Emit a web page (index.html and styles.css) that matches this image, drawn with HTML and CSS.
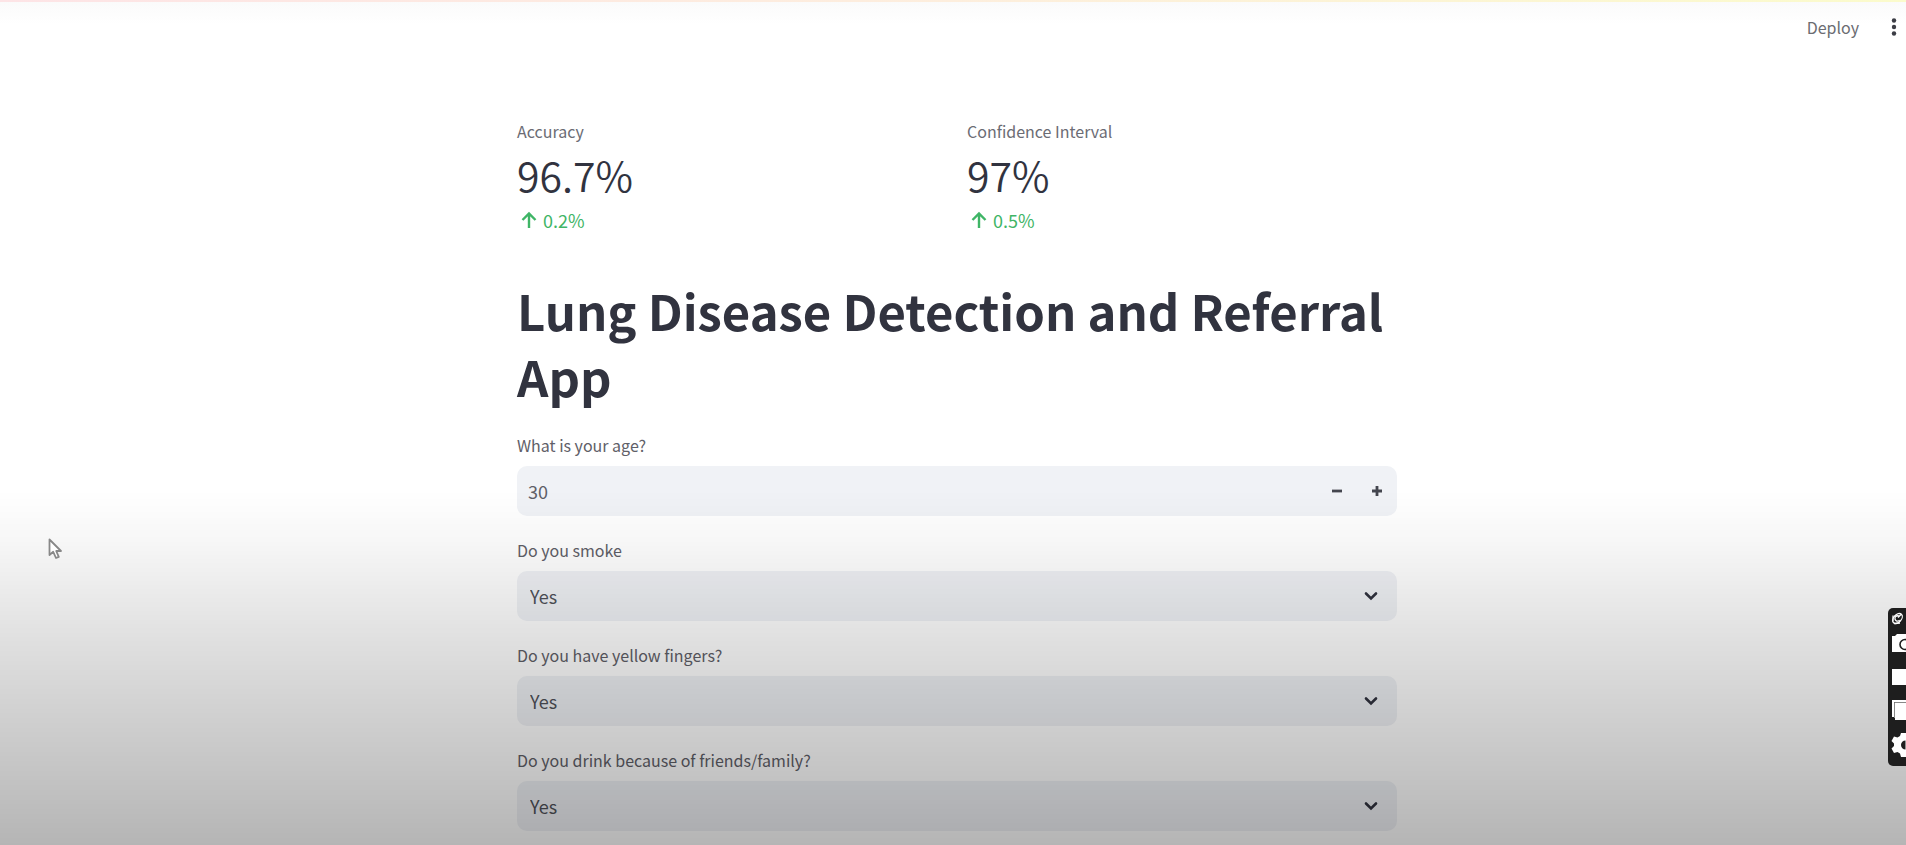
FILE: index.html
```html
<!DOCTYPE html>
<html lang="en">
<head>
<meta charset="utf-8">
<meta name="viewport" content="width=device-width, initial-scale=1">
<title>Lung Disease Detection and Referral App</title>
<link rel="stylesheet" href="styles.css">
</head>
<body>
<header class="topbar">
  <button class="deploy" type="button">Deploy</button>
  <button class="menu" type="button" aria-label="Main menu">
    <svg width="6" height="18" viewBox="0 0 6 18" fill="currentColor"><circle cx="3" cy="2.5" r="2.2"/><circle cx="3" cy="9" r="2.2"/><circle cx="3" cy="15.5" r="2.2"/></svg>
  </button>
</header>

<main class="content">
  <section class="metrics">
    <div class="metric">
      <div class="metric-label">Accuracy</div>
      <div class="metric-value">96.7%</div>
      <div class="metric-delta">
        <svg width="16" height="18" viewBox="0 0 16 18" fill="none" stroke="currentColor" stroke-width="2.4"><path d="M8 17V2.5M1.5 9 8 2.5 14.500 9"/></svg>
        <span>0.2%</span>
      </div>
    </div>
    <div class="metric">
      <div class="metric-label">Confidence Interval</div>
      <div class="metric-value">97%</div>
      <div class="metric-delta">
        <svg width="16" height="18" viewBox="0 0 16 18" fill="none" stroke="currentColor" stroke-width="2.4"><path d="M8 17V2.5M1.5 9 8 2.5 14.500 9"/></svg>
        <span>0.5%</span>
      </div>
    </div>
  </section>

  <h1 class="title">Lung Disease Detection and Referral App</h1>

  <form class="form">
    <div class="field">
      <label for="age">What is your age?</label>
      <div class="number">
        <input id="age" type="number" value="30">
        <button type="button" class="step" aria-label="Decrease"><svg width="12" height="12" viewBox="0 0 12 12" stroke="currentColor" stroke-width="2.8"><path d="M1 6H11"/></svg></button>
        <button type="button" class="step" aria-label="Increase"><svg width="12" height="12" viewBox="0 0 12 12" stroke="currentColor" stroke-width="2.8"><path d="M1 6H11M6 1V11"/></svg></button>
      </div>
    </div>
    <div class="field">
      <label for="smoke">Do you smoke</label>
      <div class="select">
        <select id="smoke"><option>Yes</option><option>No</option></select>
        <svg class="chevron" width="14" height="10" viewBox="0 0 14 10" fill="none" stroke="currentColor" stroke-width="2.6" stroke-linecap="round"><path d="M2 2.500 7 7.500 12 2.500"/></svg>
      </div>
    </div>
    <div class="field">
      <label for="fingers">Do you have yellow fingers?</label>
      <div class="select">
        <select id="fingers"><option>Yes</option><option>No</option></select>
        <svg class="chevron" width="14" height="10" viewBox="0 0 14 10" fill="none" stroke="currentColor" stroke-width="2.6" stroke-linecap="round"><path d="M2 2.500 7 7.500 12 2.500"/></svg>
      </div>
    </div>
    <div class="field">
      <label for="drink">Do you drink because of friends/family?</label>
      <div class="select">
        <select id="drink"><option>Yes</option><option>No</option></select>
        <svg class="chevron" width="14" height="10" viewBox="0 0 14 10" fill="none" stroke="currentColor" stroke-width="2.6" stroke-linecap="round"><path d="M2 2.500 7 7.500 12 2.500"/></svg>
      </div>
    </div>
  </form>
</main>

<div class="shade"></div>

<svg class="cursor" width="15" height="22" viewBox="0 0 15 22" fill="#fff" stroke="#888" stroke-width="1.8" stroke-linejoin="round"><path d="M1.500 1.500V17L5.200 13.800 8 20 10.800 18.800 8.200 13H13Z"/></svg>

<aside class="recorder" aria-label="Capture tools">
  <svg width="18" height="158" viewBox="0 0 18 158">
    <g fill="none" stroke="#fff" stroke-width="1.300"><ellipse cx="9.500" cy="10.500" rx="5.800" ry="3.800" transform="rotate(-48 9.500 10.500)"/><path d="M11.500 8.500a2.700 2.700 0 1 0 .2 3.700M5 7.500v6M6 15.500l6-.5M10 9.500l3-3"/></g>
    <path fill="#fff" d="M4 28H7L9 26H18V44H4Z"/>
    <circle cx="17" cy="36.500" r="5" fill="#fff" stroke="#1e1e1e" stroke-width="1.600"/>
    <path fill="#fff" d="M4 61H18V77H4Z"/>
    <path fill="#fff" d="M4 92H18V94H6V109H4Z"/>
    <path fill="#fff" d="M7 95H18V112H7Z"/>
    <path fill="none" stroke="#888" d="M6.500 110V94.500H18"/>
    <path fill="#fff" fill-rule="evenodd" d="M13 125H19V149H13L12 145.500 9.500 144 6 145 3.500 140.500 6 138V135.500L3.500 133 6 128.500 9.500 129.500 12 128ZM17.500 132.500a4.500 4.500 0 0 0 0 9Z"/>
  </svg>
</aside>
</body>
</html>
```
FILE: styles.css
```css
* {
  box-sizing: border-box;
}

body {
  margin: 0;
  min-height: 100vh;
  background: #fff;
  color: #31333f;
  font-family: "Noto Sans CJK SC", "Noto Sans", sans-serif;
  font-size: 16px;
  line-height: 24px;
}

button,
input,
select {
  font: inherit;
  color: inherit;
  border: 0;
  background: none;
  margin: 0;
  padding: 0;
}

.topbar {
  display: flex;
  justify-content: flex-end;
  align-items: center;
  gap: 32px;
  height: 53px;
  padding: 0 9px 0 0;
  background:
    linear-gradient(90deg, #fde4e6, #fdeedd 50%, #fbfbcc) top / 100% 2px no-repeat,
    linear-gradient(#fafafa, #fff 24px);
}

.deploy {
  color: #6b6c72;
}

.menu {
  display: flex;
  color: #3c3d45;
}

.content {
  width: 100%;
  max-width: 888px;
  margin: 0 auto;
  padding: 66px 0 12px 8px;
}

.metrics {
  display: grid;
  grid-template-columns: 1fr 1fr;
  gap: 20px;
}

.metric-label {
  color: #6b6c74;
}

.metric-value {
  margin-bottom: 3px;
  font-size: 41px;
  line-height: 62px;
  font-weight: 350;
}

.metric-delta {
  display: flex;
  align-items: center;
  gap: 6px;
  padding-left: 4px;
  color: #3fb566;
  font-size: 18px;
}

.title {
  margin: 45px 0 24px;
  font-size: 49px;
  line-height: 66px;
  font-weight: 700;
}

.form {
  display: grid;
  gap: 22px;
}

.field {
  display: grid;
  gap: 9px;
  color: #5f6068;
}

.number,
.select {
  display: flex;
  align-items: center;
  height: 50px;
  border-radius: 10px;
  background: #f0f2f6;
  font-size: 18px;
}

.number input {
  flex: 1;
  min-width: 0;
  height: 100%;
  padding-left: 11px;
  appearance: textfield;
}

.number input::-webkit-inner-spin-button {
  appearance: none;
}

.step {
  display: grid;
  place-items: center;
  width: 40px;
  height: 100%;
  color: #44464f;
}

.select {
  position: relative;
}

.select select {
  width: 100%;
  height: 100%;
  padding-left: 13px;
  appearance: none;
  color: #50525a;
}

.chevron {
  position: absolute;
  right: 19px;
  color: #31333f;
  pointer-events: none;
}

.shade {
  position: fixed;
  inset: 58% 0 0;
  background: linear-gradient(transparent, rgba(0, 0, 0, 0.03) 14%, rgba(0, 0, 0, 0.12) 42%, rgba(0, 0, 0, 0.29));
  pointer-events: none;
}

.cursor {
  position: fixed;
  left: 48px;
  top: 538px;
}

.recorder {
  position: fixed;
  right: 0;
  top: 608px;
  display: flex;
  border-radius: 5px 0 0 5px;
  background: #1e1e1e;
}
```
